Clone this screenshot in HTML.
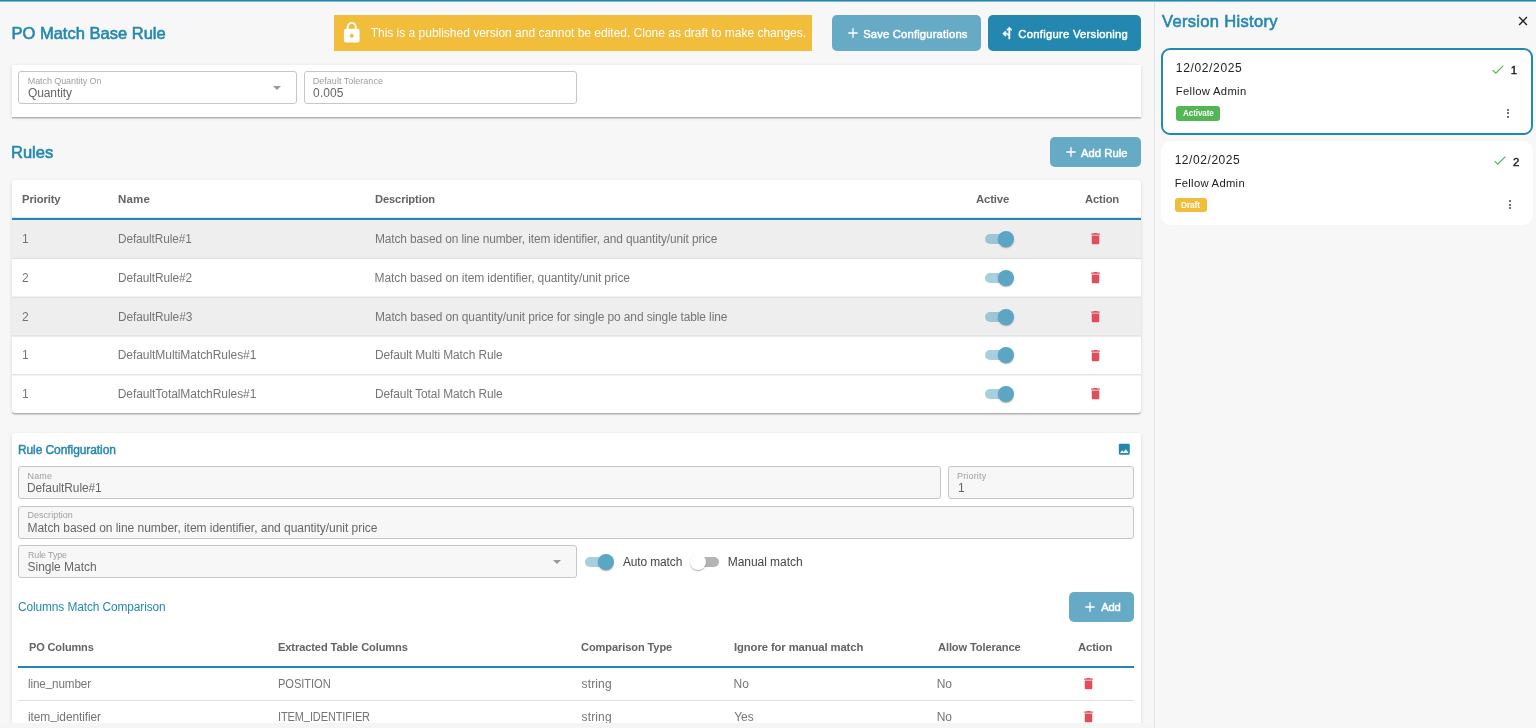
<!DOCTYPE html>
<html><head><meta charset="utf-8"><title>PO Match Base Rule</title>
<style>
*{box-sizing:border-box;margin:0;padding:0}
html,body{width:1536px;height:728px;overflow:hidden;background:#f7f7f7}
body{font-family:"Liberation Sans",sans-serif}
#root{position:relative;width:1536px;height:728px;overflow:hidden;background:#f7f7f7}
#root div,#root svg,#root span{position:absolute}
.t{line-height:1;white-space:nowrap;display:block}
.card{background:#fff;border-radius:3px;box-shadow:0 1.500px 0 0 rgba(0,0,0,.2),0 1px 3.500px 0 rgba(0,0,0,.14)}
.fld{border:1px solid #c6c6c6;border-radius:3px;background:#fff}
.fld.dis{background:#f7f7f7}
.btn{border-radius:5px}
.hl{height:2px;background:#2487af}
.sep{height:1px;background:#e0e0e0}
.alt{background:#eeeeee}
.sw{width:40px;height:24px}
.sw i{position:absolute;left:7px;top:7px;width:26px;height:10px;border-radius:5px;background:#a6cfe0}
.sw b{position:absolute;left:20px;top:4px;width:16px;height:16px;border-radius:50%;background:#5ba5c5;box-shadow:0 1.5px 1px -1px rgba(0,0,0,.2),0 1px 1px 0 rgba(0,0,0,.14),0 1px 2.5px 0 rgba(0,0,0,.12)}
.sw.alt2 i{background:#9cc5d6}
.sw.off i{background:#b4b4b4}
.sw.off b{left:4px;background:#fff}
.dot{width:2px;height:2px;border-radius:50%;background:#444}
#clip{left:0;top:723px;width:1154px;height:5px;background:#f5f5f5}
#texts{left:0;top:0;width:1536px;height:728px;will-change:transform}
.us{font-style:normal;position:relative;top:-1.700px}

</style></head><body>
<div id="root">
<div style="left:0;top:0;width:1536px;height:1px;background:#2487af"></div>
<div style="left:0;top:1px;width:1536px;height:1px;background:#80b8cf"></div>
<!-- banner -->
<div style="left:334px;top:15px;width:478px;height:36px;background:#f1bd3b"></div>
<svg style="left:340.3px;top:21.1px" width="23.500" height="23.500" viewBox="0 0 24 24"><path fill="#fff" d="M18 8h-1V6c0-2.76-2.240-5-5-5S7 3.240 7 6v2H6c-1.100 0-2 .9-2 2v10c0 1.100.9 2 2 2h12c1.100 0 2-.9 2-2V10c0-1.100-.9-2-2-2zm-6 9c-1.100 0-2-.9-2-2s.9-2 2-2 2 .9 2 2-.9 2-2 2zm3.100-9H8.900V6c0-1.710 1.390-3.100 3.100-3.100 1.710 0 3.100 1.390 3.100 3.100v2z"/></svg>
<!-- buttons -->
<div class="btn" style="left:832px;top:15px;width:149px;height:36px;background:#67aac6"></div>
<svg style="left:848.3px;top:27.9px" width="10" height="10" viewBox="0 0 10 10"><path d="M5 0.300V9.700M0.300 5H9.700" stroke="#fff" stroke-width="1.350" fill="none"/></svg>
<div class="btn" style="left:987.5px;top:15px;width:153.500px;height:36px;background:#2487af"></div>
<svg style="left:1000.4px;top:24.8px" width="16" height="16" viewBox="0 0 24 24"><path fill="#fff" stroke="#fff" stroke-width="0.7" d="M9.41 15.59 8 17l-4-4 4-4 1.41 1.41L7.83 12c1.51-.33 3.73.08 5.17 1.36V6.83l-1.590 1.590L10 7l4-4 4 4-1.410 1.410L15 6.830V21h-2v-4c-.73-2.580-3.070-3.470-5.170-3l1.580 1.590z"/></svg>
<!-- card 1 -->
<div class="card" style="left:11.5px;top:64.5px;width:1129.500px;height:52.500px;border-radius:0"></div>
<div class="fld" style="left:18px;top:71px;width:279px;height:33px"></div>
<svg style="left:273px;top:86px" width="8" height="4" viewBox="0 0 8 4"><path d="M0 0h8L4 4z" fill="#9a9a9a"/></svg>
<div class="fld" style="left:304px;top:71px;width:273px;height:33px"></div>
<!-- add rule -->
<div class="btn" style="left:1049.500px;top:137px;width:91.500px;height:30px;background:#67aac6"></div>
<svg style="left:1065.7px;top:146.6px" width="10" height="10" viewBox="0 0 10 10"><path d="M5 0.300V9.700M0.300 5H9.700" stroke="#fff" stroke-width="1.350" fill="none"/></svg>
<!-- rules table -->
<div class="card" style="left:11.5px;top:180px;width:1129.500px;height:233.200px"></div>
<svg style="left:12px;top:180px" width="1129" height="234" viewBox="0 0 1129 234">
<rect x="0" y="40.00" width="1129" height="38.40" fill="#eeeeee"/>
<rect x="0" y="117.60" width="1129" height="38.40" fill="#eeeeee"/>
<rect x="0" y="77.80" width="1129" height="1.200" fill="#dedede"/>
<rect x="0" y="116.60" width="1129" height="1.200" fill="#dedede"/>
<rect x="0" y="155.40" width="1129" height="1.200" fill="#dedede"/>
<rect x="0" y="194.20" width="1129" height="1.200" fill="#dedede"/>
<rect x="0" y="37.800" width="1129" height="2.200" fill="#2487af"/>
</svg>
<div class="sw alt2" style="left:977.7px;top:227.00px"><i></i><b></b></div>
<svg style="left:1087.9px;top:231.25px" width="15" height="15" viewBox="0 0 24 24"><path fill="#de4f5c" d="M6 19c0 1.100.9 2 2 2h8c1.100 0 2-.9 2-2V7H6v12zM19 4h-3.500l-1-1h-5l-1 1H5v2h14V4z"/></svg>
<div class="sw" style="left:977.7px;top:265.80px"><i></i><b></b></div>
<svg style="left:1087.9px;top:270.05px" width="15" height="15" viewBox="0 0 24 24"><path fill="#de4f5c" d="M6 19c0 1.100.9 2 2 2h8c1.100 0 2-.9 2-2V7H6v12zM19 4h-3.500l-1-1h-5l-1 1H5v2h14V4z"/></svg>
<div class="sw alt2" style="left:977.7px;top:304.60px"><i></i><b></b></div>
<svg style="left:1087.9px;top:308.85px" width="15" height="15" viewBox="0 0 24 24"><path fill="#de4f5c" d="M6 19c0 1.100.9 2 2 2h8c1.100 0 2-.9 2-2V7H6v12zM19 4h-3.500l-1-1h-5l-1 1H5v2h14V4z"/></svg>
<div class="sw" style="left:977.7px;top:343.40px"><i></i><b></b></div>
<svg style="left:1087.9px;top:347.65px" width="15" height="15" viewBox="0 0 24 24"><path fill="#de4f5c" d="M6 19c0 1.100.9 2 2 2h8c1.100 0 2-.9 2-2V7H6v12zM19 4h-3.500l-1-1h-5l-1 1H5v2h14V4z"/></svg>
<div class="sw" style="left:977.7px;top:382.20px"><i></i><b></b></div>
<svg style="left:1087.9px;top:386.45px" width="15" height="15" viewBox="0 0 24 24"><path fill="#de4f5c" d="M6 19c0 1.100.9 2 2 2h8c1.100 0 2-.9 2-2V7H6v12zM19 4h-3.500l-1-1h-5l-1 1H5v2h14V4z"/></svg>
<!-- rule config card -->
<div class="card" style="left:11.5px;top:433px;width:1129.500px;height:320px"></div>
<svg style="left:1117.1px;top:441.8px" width="14.600" height="14.600" viewBox="0 0 24 24"><path fill="#2487af" d="M21 19V5c0-1.100-.9-2-2-2H5c-1.100 0-2 .9-2 2v14c0 1.100.9 2 2 2h14c1.100 0 2-.9 2-2zM8.500 13.500l2.500 3.010L14.500 12l4.500 6H5l3.500-4.500z"/></svg>
<div class="fld dis" style="left:18px;top:466px;width:923px;height:33px"></div>
<div class="fld dis" style="left:948px;top:466px;width:186px;height:33px"></div>
<div class="fld dis" style="left:18px;top:506px;width:1116px;height:33px"></div>
<div class="fld dis" style="left:18px;top:545px;width:559px;height:33px"></div>
<svg style="left:552.5px;top:560px" width="8" height="4" viewBox="0 0 8 4"><path d="M0 0h8L4 4z" fill="#9a9a9a"/></svg>
<div class="sw" style="left:577.9px;top:550px"><i></i><b></b></div>
<div class="sw off" style="left:686px;top:550px"><i></i><b></b></div>
<div class="btn" style="left:1069px;top:592px;width:65px;height:29.500px;background:#67aac6"></div>
<svg style="left:1085px;top:601.5px" width="10" height="10" viewBox="0 0 10 10"><path d="M5 0.300V9.700M0.300 5H9.700" stroke="#fff" stroke-width="1.350" fill="none"/></svg>
<div class="hl" style="left:18px;top:666px;width:1116px"></div>
<div class="sep" style="left:18px;top:700px;width:1116px"></div>
<svg style="left:1081.2px;top:676.3px" width="15" height="15" viewBox="0 0 24 24"><path fill="#de4f5c" d="M6 19c0 1.100.9 2 2 2h8c1.100 0 2-.9 2-2V7H6v12zM19 4h-3.500l-1-1h-5l-1 1H5v2h14V4z"/></svg>
<svg style="left:1081.2px;top:709.3px" width="15" height="15" viewBox="0 0 24 24"><path fill="#de4f5c" d="M6 19c0 1.100.9 2 2 2h8c1.100 0 2-.9 2-2V7H6v12zM19 4h-3.500l-1-1h-5l-1 1H5v2h14V4z"/></svg>

<!-- side panel -->
<div style="left:1154px;top:2px;width:1px;height:726px;background:#e3e3e3"></div>
<svg style="left:1518px;top:15.900px" width="10" height="10" viewBox="0 0 10 10"><path d="M1.100 1.100L8.900 8.900M8.900 1.100L1.100 8.900" stroke="#222" stroke-width="1.400" fill="none"/></svg>
<div style="left:1161px;top:48px;width:371.750px;height:86.500px;border:2px solid #2487af;border-radius:9px;background:#fff"></div>
<div style="left:1161px;top:141px;width:371.750px;height:83.500px;border-radius:10px;background:#fff"></div>
<svg style="left:1492px;top:64.500px" width="12" height="9" viewBox="0 0 12 9"><path d="M0.700 5.200L3.800 8.200L11.300 0.700" stroke="#4caf50" stroke-width="1.100" fill="none"/></svg>
<svg style="left:1493.500px;top:156px" width="12" height="9" viewBox="0 0 12 9"><path d="M0.700 5.200L3.800 8.200L11.300 0.700" stroke="#4caf50" stroke-width="1.100" fill="none"/></svg>
<div style="left:1176px;top:106px;width:44px;height:14.500px;border-radius:3px;background:#52b556"></div>
<div style="left:1174.500px;top:197.500px;width:32.500px;height:14.500px;border-radius:3px;background:#f1bd3b"></div>
<div class="dot" style="left:1507px;top:108.500px"></div><div class="dot" style="left:1507px;top:112px"></div><div class="dot" style="left:1507px;top:115.500px"></div>
<div class="dot" style="left:1508.500px;top:200px"></div><div class="dot" style="left:1508.500px;top:203.500px"></div><div class="dot" style="left:1508.500px;top:207px"></div>

<div id="texts">
<span class="t" style="left:11.45px;top:24.90px;font-size:16.5px;color:#2487af;letter-spacing:0.011px;-webkit-text-stroke:0.6px currentColor;">PO Match Base Rule</span>
<span class="t" style="left:370.67px;top:27.20px;font-size:12px;color:#fff;letter-spacing:-0.011px;">This is a published version and cannot be edited. Clone as draft to make changes.</span>
<span class="t" style="left:863.17px;top:28.70px;font-size:11.25px;color:#fff;letter-spacing:0.167px;-webkit-text-stroke:0.45px currentColor;">Save Configurations</span>
<span class="t" style="left:1018.31px;top:28.70px;font-size:11.25px;color:#fff;letter-spacing:0.270px;-webkit-text-stroke:0.45px currentColor;">Configure Versioning</span>
<span class="t" style="left:27.81px;top:76.70px;font-size:9px;color:#9e9e9e;letter-spacing:-0.088px;">Match Quantity On</span>
<span class="t" style="left:27.95px;top:87.00px;font-size:12px;color:#666666;letter-spacing:-0.100px;">Quantity</span>
<span class="t" style="left:312.81px;top:76.70px;font-size:9px;color:#9e9e9e;letter-spacing:0.014px;">Default Tolerance</span>
<span class="t" style="left:313.12px;top:87.00px;font-size:12px;color:#666666;letter-spacing:0.096px;">0.005</span>
<span class="t" style="left:11.00px;top:143.80px;font-size:16.5px;color:#2487af;-webkit-text-stroke:0.6px currentColor;">Rules</span>
<span class="t" style="left:1081.00px;top:148.00px;font-size:11.25px;color:#fff;letter-spacing:0.047px;-webkit-text-stroke:0.45px currentColor;">Add Rule</span>
<span class="t" style="left:21.81px;top:194.40px;font-size:11.5px;color:#636363;transform:scaleX(0.9817);transform-origin:0 0;font-weight:700;letter-spacing:-0.132px;">Priority</span>
<span class="t" style="left:117.98px;top:194.40px;font-size:11.5px;color:#636363;font-weight:700;letter-spacing:0.191px;">Name</span>
<span class="t" style="left:374.85px;top:194.40px;font-size:11.5px;color:#636363;transform:scaleX(0.9688);transform-origin:0 0;font-weight:700;letter-spacing:-0.119px;">Description</span>
<span class="t" style="left:975.79px;top:194.40px;font-size:11.5px;color:#636363;transform:scaleX(0.9880);transform-origin:0 0;font-weight:700;letter-spacing:-0.154px;">Active</span>
<span class="t" style="left:1084.81px;top:194.40px;font-size:11.5px;color:#636363;transform:scaleX(0.9735);transform-origin:0 0;font-weight:700;letter-spacing:-0.130px;">Action</span>
<span class="t" style="left:22.00px;top:232.90px;font-size:12px;color:#757575;">1</span>
<span class="t" style="left:117.75px;top:232.90px;font-size:12px;color:#757575;transform:scaleX(0.9821);transform-origin:0 0;letter-spacing:-0.078px;">DefaultRule#1</span>
<span class="t" style="left:374.50px;top:232.90px;font-size:12px;color:#757575;transform:scaleX(0.9916);transform-origin:0 0;letter-spacing:-0.105px;">Match based on line number, item identifier, and quantity/unit price</span>
<span class="t" style="left:21.95px;top:271.70px;font-size:12px;color:#757575;">2</span>
<span class="t" style="left:117.75px;top:271.70px;font-size:12px;color:#757575;transform:scaleX(0.9891);transform-origin:0 0;letter-spacing:-0.100px;">DefaultRule#2</span>
<span class="t" style="left:374.50px;top:271.70px;font-size:12px;color:#757575;letter-spacing:-0.093px;">Match based on item identifier, quantity/unit price</span>
<span class="t" style="left:21.95px;top:310.50px;font-size:12px;color:#757575;">2</span>
<span class="t" style="left:117.75px;top:310.50px;font-size:12px;color:#757575;transform:scaleX(0.9890);transform-origin:0 0;letter-spacing:-0.081px;">DefaultRule#3</span>
<span class="t" style="left:374.50px;top:310.50px;font-size:12px;color:#757575;transform:scaleX(0.9951);transform-origin:0 0;letter-spacing:-0.098px;">Match based on quantity/unit price for single po and single table line</span>
<span class="t" style="left:22.00px;top:349.30px;font-size:12px;color:#757575;">1</span>
<span class="t" style="left:117.77px;top:349.30px;font-size:12px;color:#757575;letter-spacing:-0.064px;">DefaultMultiMatchRules#1</span>
<span class="t" style="left:374.50px;top:349.30px;font-size:12px;color:#757575;transform:scaleX(0.9914);transform-origin:0 0;letter-spacing:-0.088px;">Default Multi Match Rule</span>
<span class="t" style="left:22.00px;top:388.10px;font-size:12px;color:#757575;">1</span>
<span class="t" style="left:117.77px;top:388.10px;font-size:12px;color:#757575;letter-spacing:-0.064px;">DefaultTotalMatchRules#1</span>
<span class="t" style="left:374.50px;top:388.10px;font-size:12px;color:#757575;transform:scaleX(0.9938);transform-origin:0 0;letter-spacing:-0.088px;">Default Total Match Rule</span>
<span class="t" style="left:17.91px;top:444.00px;font-size:12px;color:#2487af;letter-spacing:-0.078px;-webkit-text-stroke:0.45px currentColor;">Rule Configuration</span>
<span class="t" style="left:27.53px;top:471.70px;font-size:9px;color:#9e9e9e;letter-spacing:0.163px;">Name</span>
<span class="t" style="left:27.25px;top:482.00px;font-size:12px;color:#666666;transform:scaleX(0.9931);transform-origin:0 0;letter-spacing:-0.065px;">DefaultRule#1</span>
<span class="t" style="left:957.00px;top:471.70px;font-size:9px;color:#9e9e9e;letter-spacing:0.161px;">Priority</span>
<span class="t" style="left:957.89px;top:482.00px;font-size:12px;color:#666666;">1</span>
<span class="t" style="left:27.53px;top:511.20px;font-size:9px;color:#9e9e9e;letter-spacing:0.025px;">Description</span>
<span class="t" style="left:27.50px;top:521.50px;font-size:12px;color:#666666;letter-spacing:-0.034px;">Match based on line number, item identifier, and quantity/unit price</span>
<span class="t" style="left:27.68px;top:550.70px;font-size:9px;color:#9e9e9e;transform:scaleX(0.9885);transform-origin:0 0;letter-spacing:-0.111px;">Rule Type</span>
<span class="t" style="left:27.56px;top:561.00px;font-size:12px;color:#666666;letter-spacing:-0.029px;">Single Match</span>
<span class="t" style="left:623.00px;top:555.90px;font-size:12px;color:#444;transform:scaleX(0.9943);transform-origin:0 0;letter-spacing:-0.120px;">Auto match</span>
<span class="t" style="left:727.77px;top:555.90px;font-size:12px;color:#444;letter-spacing:-0.048px;">Manual match</span>
<span class="t" style="left:18.42px;top:600.50px;font-size:12px;color:#2487af;transform:scaleX(0.9908);transform-origin:0 0;letter-spacing:-0.103px;">Columns Match Comparison</span>
<span class="t" style="left:1101.14px;top:602.20px;font-size:11.25px;color:#fff;letter-spacing:-0.178px;-webkit-text-stroke:0.45px currentColor;">Add</span>
<span class="t" style="left:28.64px;top:642.00px;font-size:11.5px;color:#636363;transform:scaleX(0.9541);transform-origin:0 0;font-weight:700;letter-spacing:-0.121px;">PO Columns</span>
<span class="t" style="left:277.85px;top:642.00px;font-size:11.5px;color:#636363;transform:scaleX(0.9652);transform-origin:0 0;font-weight:700;letter-spacing:-0.115px;">Extracted Table Columns</span>
<span class="t" style="left:581.49px;top:642.00px;font-size:11.5px;color:#636363;transform:scaleX(0.9614);transform-origin:0 0;font-weight:700;letter-spacing:-0.100px;">Comparison Type</span>
<span class="t" style="left:733.78px;top:642.00px;font-size:11.5px;color:#636363;transform:scaleX(0.9795);transform-origin:0 0;font-weight:700;letter-spacing:-0.098px;">Ignore for manual match</span>
<span class="t" style="left:937.83px;top:642.00px;font-size:11.5px;color:#636363;transform:scaleX(0.9625);transform-origin:0 0;font-weight:700;letter-spacing:-0.099px;">Allow Tolerance</span>
<span class="t" style="left:1078.29px;top:642.00px;font-size:11.5px;color:#636363;transform:scaleX(0.9832);transform-origin:0 0;font-weight:700;letter-spacing:-0.137px;">Action</span>
<span class="t" style="left:28.35px;top:677.50px;font-size:12px;color:#757575;transform:scaleX(0.9731);transform-origin:0 0;letter-spacing:-0.125px;">line<i class="us">_</i>number</span>
<span class="t" style="left:277.50px;top:677.50px;font-size:12px;color:#757575;transform:scaleX(0.9289);transform-origin:0 0;letter-spacing:-0.077px;">POSITION</span>
<span class="t" style="left:581.56px;top:677.50px;font-size:12px;color:#757575;letter-spacing:0.132px;">string</span>
<span class="t" style="left:733.50px;top:677.50px;font-size:12px;color:#757575;">No</span>
<span class="t" style="left:936.68px;top:677.50px;font-size:12px;color:#757575;">No</span>
<span class="t" style="left:28.33px;top:710.50px;font-size:12px;color:#757575;transform:scaleX(0.9954);transform-origin:0 0;letter-spacing:-0.093px;">item<i class="us">_</i>identifier</span>
<span class="t" style="left:277.50px;top:710.50px;font-size:12px;color:#757575;transform:scaleX(0.9168);transform-origin:0 0;letter-spacing:-0.115px;">ITEM<i class="us">_</i>IDENTIFIER</span>
<span class="t" style="left:581.56px;top:710.50px;font-size:12px;color:#757575;letter-spacing:0.132px;">string</span>
<span class="t" style="left:734.15px;top:710.50px;font-size:12px;color:#757575;">Yes</span>
<span class="t" style="left:936.68px;top:710.50px;font-size:12px;color:#757575;">No</span>
<span class="t" style="left:1162.00px;top:13.40px;font-size:16.5px;color:#2487af;letter-spacing:0.327px;-webkit-text-stroke:0.6px currentColor;">Version History</span>
<span class="t" style="left:1175.85px;top:61.90px;font-size:12px;color:#222222;letter-spacing:0.647px;">12/02/2025</span>
<span class="t" style="left:1510.75px;top:65.00px;font-size:11.5px;color:#111;-webkit-text-stroke:0.35px currentColor;">1</span>
<span class="t" style="left:1175.85px;top:85.90px;font-size:11.25px;color:#222222;letter-spacing:0.310px;">Fellow Admin</span>
<span class="t" style="left:1183.24px;top:109.00px;font-size:9px;color:#fff;transform:scaleX(0.9026);transform-origin:0 0;font-weight:700;letter-spacing:-0.116px;">Activate</span>
<span class="t" style="left:1174.63px;top:153.70px;font-size:12px;color:#222222;letter-spacing:0.565px;">12/02/2025</span>
<span class="t" style="left:1513.08px;top:156.50px;font-size:11.5px;color:#111;-webkit-text-stroke:0.35px currentColor;">2</span>
<span class="t" style="left:1174.63px;top:177.60px;font-size:11.25px;color:#222222;letter-spacing:0.283px;">Fellow Admin</span>
<span class="t" style="left:1180.74px;top:200.50px;font-size:9px;color:#fff;transform:scaleX(0.9291);transform-origin:0 0;font-weight:700;letter-spacing:-0.134px;">Draft</span>
</div>
<div id="clip"></div>
</div>
</body></html>
